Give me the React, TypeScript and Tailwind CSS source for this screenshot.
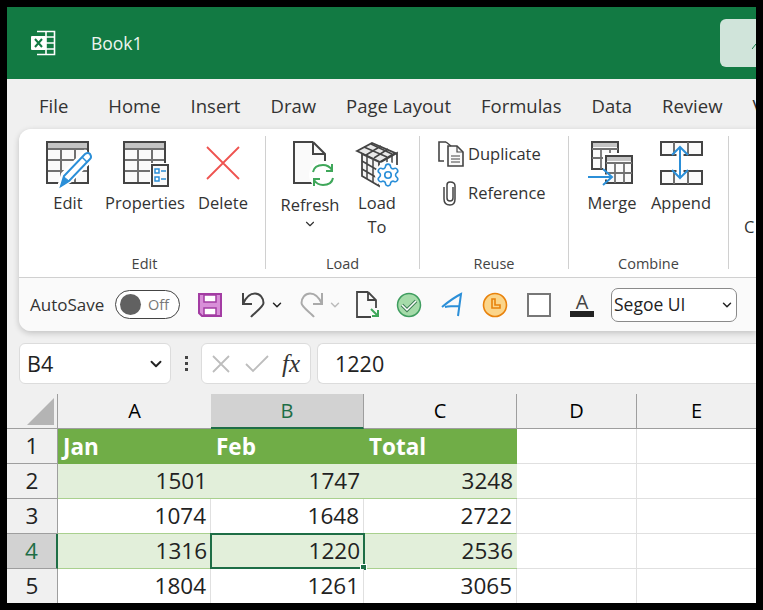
import React from "react";
import { ChevronDown, Settings } from "lucide-react";

const font = "font-['Open_Sans',sans-serif]";
const grid = "#707070";
const edge = "#444444";
const blue = "#2b8fd8";

const tabs = ["Home", "Insert", "Draw", "Page Layout", "Formulas", "Data", "Review", "View"];

const rows = [
  { n: "2", a: "1501", b: "1747", c: "3248", band: true },
  { n: "3", a: "1074", b: "1648", c: "2722", band: false },
  { n: "4", a: "1316", b: "1220", c: "2536", band: true, active: true },
  { n: "5", a: "1804", b: "1261", c: "3065", band: false },
];

const TableBase = () => (
  <>
    <rect x="1" y="1" width="41" height="41" fill="#fafafa" stroke={edge} strokeWidth="2" />
    <rect x="2" y="2" width="39" height="5" fill="#c4c4c4" />
    <path d="M2 8H41M2 19H41M2 30H41M15 8V41M29 8V41" stroke={grid} strokeWidth="2" fill="none" />
  </>
);

const EditIcon = () => (
  <svg width="48" height="48" viewBox="0 0 48 48">
    <TableBase />
    <path d="M13 46 L17 33 L39 11 L46 18 L24 40 Z" fill="#fff" stroke="#fff" strokeWidth="4" />
    <path d="M15 45 L18 35 L39 13 Q42 11 44 13 Q46 16 44 18 L23 40 Z" fill="#fff" stroke={blue} strokeWidth="2" />
    <path d="M15 45 L18 36 L23 40 Z" fill={blue} stroke={blue} />
    <path d="M36 16 L41 21" stroke={blue} strokeWidth="1.5" />
  </svg>
);

const PropertiesIcon = () => (
  <svg width="48" height="48" viewBox="0 0 48 48">
    <TableBase />
    <rect x="27" y="22" width="20" height="26" fill="#fff" />
    <rect x="29" y="24" width="16" height="21" fill="#fafafa" stroke={edge} strokeWidth="2" />
    <rect x="32" y="28" width="4" height="4" fill="#fff" stroke={blue} strokeWidth="1.5" />
    <rect x="32" y="36" width="4" height="4" fill="#fff" stroke={blue} strokeWidth="1.5" />
    <path d="M38 30H43M38 38H43" stroke={blue} strokeWidth="1.5" />
  </svg>
);

const DeleteIcon = () => (
  <svg width="48" height="48" viewBox="0 0 48 48">
    <path d="M8 6L40 38M40 6L8 38" stroke="#ef5350" strokeWidth="1.8" />
  </svg>
);

const RefreshIcon = () => (
  <svg width="48" height="48" viewBox="0 0 48 48">
    <path d="M21 1L32 13V22H22V42H1V1Z" fill="#fafafa" />
    <path d="M20 1H1V42H20M20 1V13H32M20 1L32 13V20" fill="none" stroke={edge} strokeWidth="2" />
    <circle cx="30" cy="34" r="14" fill="#fff" />
    <path d="M20 31C21 26 25 24 30 24C34 24 37 26 39 29M39 23V30H33" fill="none" stroke="#3fa75a" strokeWidth="2" />
    <path d="M40 37C39 42 35 44 30 44C26 44 23 42 21 39M21 45V38H27" fill="none" stroke="#3fa75a" strokeWidth="2" />
  </svg>
);

const LoadToIcon = () => (
  <svg width="48" height="48" viewBox="0 0 48 48">
    <path d="M2 10L17 2L40 12L25 21Z" fill="#e8e8e8" stroke={edge} strokeWidth="1.8" />
    <path d="M9 6L32 16M16 3L37 13M11 14L26 5M19 17L33 8" stroke={edge} strokeWidth="1.5" fill="none" />
    <path d="M7 13L7 35L24 45L24 21Z" fill="#f5f5f5" stroke={edge} strokeWidth="1.8" />
    <path d="M12 16V38M18 19V42M7 20L24 30M7 28L24 38" stroke={edge} strokeWidth="1.5" fill="none" />
    <path d="M26 21L42 12V24" fill="none" stroke={edge} strokeWidth="1.8" />
    <path d="M32 17V24M37 15V24" stroke={edge} strokeWidth="1.5" />
    <circle cx="33" cy="34" r="13" fill="#fff" />
    <Settings x={20} y={21} width={26} height={26} color={blue} strokeWidth={1.5} />
  </svg>
);

const MergeIcon = () => (
  <svg width="48" height="48" viewBox="0 0 48 48">
    <rect x="5" y="1" width="26" height="27" fill="#fafafa" stroke={edge} strokeWidth="2" />
    <rect x="6" y="2" width="24" height="4" fill="#c4c4c4" />
    <path d="M5 8H31M5 17H31M14 8V28M23 8V28" stroke={grid} strokeWidth="1.8" />
    <rect x="18" y="14" width="28" height="29" fill="#fafafa" stroke="#fff" strokeWidth="4" />
    <rect x="19" y="15" width="26" height="27" fill="#fafafa" stroke={edge} strokeWidth="2" />
    <rect x="20" y="16" width="24" height="4" fill="#c4c4c4" />
    <path d="M19 22H45M19 32H45M28 22V42M37 22V42" stroke={grid} strokeWidth="1.8" />
    <path d="M1 36H24" stroke="#fff" strokeWidth="5" />
    <path d="M1 36H24M16 28L25 36L16 44" fill="none" stroke={blue} strokeWidth="2" />
  </svg>
);

const AppendIcon = () => (
  <svg width="48" height="48" viewBox="0 0 48 48">
    <rect x="4" y="1" width="41" height="13" fill="#fafafa" stroke={edge} strokeWidth="2" />
    <rect x="4" y="30" width="41" height="13" fill="#fafafa" stroke={edge} strokeWidth="2" />
    <path d="M17 1V14M31 1V14M17 30V43M31 30V43" stroke={grid} strokeWidth="2" />
    <path d="M23 6V38" stroke="#fff" strokeWidth="7" />
    <path d="M15 14L23 6L31 14M15 29L23 37L31 29M23 6V37" fill="none" stroke={blue} strokeWidth="2" />
  </svg>
);

const DuplicateIcon = () => (
  <svg width="28" height="26" viewBox="0 0 28 26">
    <path d="M9 1H2V20H7" fill="none" stroke={edge} strokeWidth="1.6" />
    <path d="M11 5H20L26 11V25H11Z" fill="#fafafa" stroke={edge} strokeWidth="1.6" />
    <path d="M20 5V11H26M14 15H23M14 18H23M14 21H23" fill="none" stroke={edge} strokeWidth="1.2" />
    <path d="M9 1L14 5" stroke={edge} strokeWidth="1.4" />
  </svg>
);

const ClipIcon = () => (
  <svg width="16" height="26" viewBox="0 0 16 26">
    <path d="M11 7V18C11 20 10 21 8 21C6 21 5 20 5 18V5C5 3 6 2 8 2C11 2 13 3 13 6V19C13 23 11 25 8 25C4 25 2 23 2 19V7" fill="none" stroke={edge} strokeWidth="1.5" />
  </svg>
);

const RibbonButton = ({ icon, label, second, w, iconClass = "", labelClass = "mt-[1px]" }: any) => (
  <div className="flex flex-col items-center" style={{ width: w }}>
    <div className={`h-[48px] w-[48px] ${iconClass}`}>{icon}</div>
    <div className={`h-[25px] text-[16.5px] leading-[25px] text-[#333] ${labelClass}`}>{label}</div>
    {second}
  </div>
);

const Group = ({ label, width, pl, children }: any) => (
  <div className="flex h-[133px] shrink-0 flex-col border-r border-[#d0d0d0] pt-[5px]" style={{ width }}>
    <div className="flex h-[120px] shrink-0 items-start">{children}</div>
    <div className="text-center text-[14.5px] leading-[6px] text-[#444]" style={{ paddingLeft: pl }}>
      {label}
    </div>
  </div>
);

const App = () => {
  return (
    <div className={`h-[610px] w-[763px] overflow-hidden bg-black p-[7px] ${font}`}>
      <div className="h-[596px] w-[749px] overflow-hidden bg-[#f0f0f0]">
        {/* title bar */}
        <div className="flex h-[72px] items-center justify-between overflow-hidden bg-[#127a43]">
          <div className="flex items-center">
            <svg className="ml-[23px]" width="26" height="26" viewBox="0 0 26 26">
              <path d="M7 1.5H24.5V24.5H7" fill="none" stroke="#fff" strokeWidth="1.6" />
              <path d="M16 2V24M16 7H24M16 13H24M16 19H24" stroke="#fff" strokeWidth="1.6" />
              <rect x="1" y="6" width="15" height="14" rx="1" fill="#fff" />
              <path d="M5 9L12 17M12 9L5 17" stroke="#127a43" strokeWidth="2" />
            </svg>
            <div className="ml-[35px] text-[17.5px] text-[#eef5f0]">Book1</div>
          </div>
          <div className="flex h-[48px] w-[36px] items-center justify-end rounded-l-[6px] bg-[#d0e4da]">
            <svg className="mt-[6px]" width="4" height="7" viewBox="0 0 4 7">
              <path d="M0 6L4 1" stroke="#127a43" strokeWidth="1" />
            </svg>
          </div>
        </div>

        {/* tabs */}
        <div className="flex h-[50px] items-center whitespace-nowrap pl-[32px] pt-[4px] text-[18.5px] text-[#333]">
          <div className="mr-[40px]">File</div>
          <div className="flex gap-[30px]">
            {tabs.map((t) => (
              <div key={t}>{t}</div>
            ))}
          </div>
        </div>

        {/* ribbon */}
        <div className="ml-[12px] overflow-hidden rounded-l-[12px] shadow-[0_2px_6px_rgba(0,0,0,0.2)]">
          <div className="flex h-[148px] bg-white pt-[7px]">
            <Group label="Edit" width={247} pl={5}>
              <div className="flex pl-[11px]">
                <RibbonButton w={76} iconClass="ml-[4px]" icon={<EditIcon />} label="Edit" />
                <RibbonButton w={78} iconClass="ml-[4px]" icon={<PropertiesIcon />} label="Properties" />
                <RibbonButton w={78} icon={<DeleteIcon />} label="Delete" />
              </div>
            </Group>
            <Group label="Load" width={154}>
              <div className="flex pl-[11px]">
                <RibbonButton
                  w={66}
                  iconClass="ml-[14px]"
                  labelClass="mt-[3px]"
                  icon={<RefreshIcon />}
                  label="Refresh"
                  second={<ChevronDown size={14} color="#333" />}
                />
                <RibbonButton
                  w={68}
                  iconClass="ml-[4px]"
                  icon={<LoadToIcon />}
                  label="Load"
                  second={<div className="text-[16.5px] leading-[24px] text-[#333]">To</div>}
                />
              </div>
            </Group>
            <Group label="Reuse" width={149}>
              <div className="flex flex-col gap-[13px] pl-[17px] text-[16.5px] text-[#333]">
                <div className="flex h-[26px] items-center gap-[3px]">
                  <DuplicateIcon />
                  <span>Duplicate</span>
                </div>
                <div className="flex h-[26px] items-center">
                  <div className="ml-[5px] mr-[10px] flex"><ClipIcon /></div>
                  <span>Reference</span>
                </div>
              </div>
            </Group>
            <Group label="Combine" width={160}>
              <div className="flex pl-[9px]">
                <RibbonButton w={68} iconClass="mr-[2px]" icon={<MergeIcon />} label="Merge" />
                <RibbonButton w={70} icon={<AppendIcon />} label="Append" />
              </div>
            </Group>
            <div className="pl-[15px] pt-[79px] text-[16.5px] text-[#333]">C</div>
          </div>

          {/* quick access */}
          <div className="flex h-[54px] items-center border-t border-[#d0d0d0] bg-[#fafafa] pl-[11px]">
            <span className="w-[76px] text-[17px] text-[#333]">AutoSave</span>
            <div className="ml-[9px] flex h-[29px] w-[65px] items-center rounded-full border border-[#444] bg-white pl-[4px]">
              <div className="h-[21px] w-[21px] rounded-full bg-[#616161]" />
              <span className="ml-[7px] text-[14.5px] text-[#777]">Off</span>
            </div>
            <svg className="ml-[18px]" width="24" height="24" viewBox="0 0 24 24">
              <path d="M1 1H23V23H4L1 20Z" fill="#d88fd8" stroke="#a33ca3" strokeWidth="2" />
              <rect x="6" y="2" width="12" height="7" fill="#fff" stroke="#a33ca3" strokeWidth="1.5" />
              <rect x="6" y="15" width="12" height="7" fill="#fff" stroke="#a33ca3" strokeWidth="1.5" />
            </svg>
            <svg className="ml-[19px]" width="24" height="26" viewBox="0 0 24 26">
              <path d="M2 1V12H11M2 12C5 5 9 1.5 14 1.5C19 1.5 22.5 6 22.5 11C22.5 15 13 21 10 25" fill="none" stroke="#444" strokeWidth="2" />
            </svg>
            <ChevronDown className="ml-[5px]" size={14} color="#222" strokeWidth={2.5} />
            <svg className="ml-[16px]" width="24" height="26" viewBox="0 0 24 26">
              <path d="M22 1V12H13M22 12C19 5 15 1.5 10 1.5C5 1.5 1.5 6 1.5 11C1.5 15 11 21 14 25" fill="none" stroke="#aaa" strokeWidth="2" />
            </svg>
            <ChevronDown className="ml-[4px]" size={14} color="#bbb" strokeWidth={2.5} />
            <svg className="ml-[14px]" width="24" height="27" viewBox="0 0 24 27">
              <path d="M12 1H1V26H15M12 1V9H20M12 1L20 9V17" fill="none" stroke="#444" strokeWidth="1.8" />
              <path d="M15 18L22 25M22 19V25H16" fill="none" stroke="#3fa75a" strokeWidth="2" />
            </svg>
            <svg className="ml-[16px]" width="26" height="26" viewBox="0 0 26 26">
              <circle cx="13" cy="13" r="11.5" fill="#a5dba9" stroke="#3f9d5f" strokeWidth="1.5" />
              <path d="M6 13L11 18L20 9" fill="none" stroke="#3f7d55" strokeWidth="3.5" />
              <path d="M6 13L11 18L20 9" fill="none" stroke="#fff" strokeWidth="1.5" />
            </svg>
            <svg className="ml-[19px]" width="22" height="26" viewBox="0 0 22 26">
              <path d="M1 15C7 10 14 5 20 2C19 9 18 17 17 24M4 15C9 14 13 14 18 14" fill="none" stroke={blue} strokeWidth="2" />
            </svg>
            <svg className="ml-[19px]" width="26" height="26" viewBox="0 0 26 26">
              <circle cx="13" cy="13" r="11.5" fill="#fbd58a" stroke="#e8820c" strokeWidth="1.6" />
              <path d="M10 7V16H18V13H13V7Z" fill="#fbd58a" stroke="#e8820c" strokeWidth="1.6" />
            </svg>
            <div className="ml-[19px] h-[24px] w-[24px] border-2 border-[#777] bg-white" />
            <div className="ml-[19px] flex w-[24px] flex-col items-center">
              <span className="h-[18px] text-[20px] leading-[18px] text-[#444]">A</span>
              <div className="h-[6px] w-[24px] bg-[#222]" />
            </div>
            <div className="ml-[17px] flex h-[34px] w-[126px] items-center justify-between rounded-[7px] border border-[#8a8a8a] bg-white pl-[2px] pr-[2px]">
              <span className="text-[17.5px] text-[#222]">Segoe UI</span>
              <ChevronDown size={14} color="#222" strokeWidth={2.5} />
            </div>
          </div>
        </div>

        {/* formula bar */}
        <div className="ml-[12px] mt-[12px] flex h-[41px] items-stretch">
          <div className="flex w-[152px] items-center justify-between rounded-[6px] border border-[#dcdcdc] bg-white pl-[7px] pr-[5px]">
            <span className="pt-[2px] text-[21.5px] text-[#222]">B4</span>
            <ChevronDown size={18} color="#222" strokeWidth={2.5} />
          </div>
          <div className="flex w-[30px] flex-col items-center justify-center gap-[3px]">
            <div className="h-[3px] w-[3px] bg-[#444]" />
            <div className="h-[3px] w-[3px] bg-[#444]" />
            <div className="h-[3px] w-[3px] bg-[#444]" />
          </div>
          <div className="flex w-[110px] items-center rounded-[6px] border border-[#dcdcdc] bg-white pl-[9px]">
            <svg width="20" height="20" viewBox="0 0 20 20">
              <path d="M2 2L18 18M18 2L2 18" stroke="#bdbdbd" strokeWidth="1.8" />
            </svg>
            <svg className="ml-[13px]" width="26" height="20" viewBox="0 0 26 20">
              <path d="M2 10L9 17L24 2" fill="none" stroke="#bdbdbd" strokeWidth="1.8" />
            </svg>
            <span className="ml-[12px] font-['Liberation_Serif',serif] text-[25px] italic leading-none text-[#333]">fx</span>
          </div>
          <div className="ml-[6px] flex flex-1 items-center rounded-l-[6px] border-y border-l border-[#dcdcdc] bg-white pl-[17px]">
            <span className="pt-[2px] text-[21.5px] text-[#222]">1220</span>
          </div>
        </div>

        {/* sheet */}
        <div className="mt-[10px] grid grid-cols-[51px_153px_153px_153px_120px_119px] text-[22.5px] text-[#222]">
          <div className="flex h-[35px] items-end justify-end border-b border-r border-[#9e9e9e] bg-[#f0f0f0] pb-[3px] pr-[3px]">
            <div className="h-0 w-0 border-b-[27px] border-l-[27px] border-b-[#b4b4b4] border-l-transparent" />
          </div>
          <div className="flex h-[35px] items-center justify-center border-b border-[#9e9e9e] text-[20px] text-black">A</div>
          <div className="flex h-[35px] items-center justify-center border-b-2 border-r border-b-[#1e6e46] border-r-[#9e9e9e] bg-[#d2d2d2] text-[20px] text-[#1e6e46]">B</div>
          <div className="flex h-[35px] items-center justify-center border-b border-r border-[#9e9e9e] text-[20px] text-black">C</div>
          <div className="flex h-[35px] items-center justify-center border-b border-r border-[#9e9e9e] text-[20px] text-black">D</div>
          <div className="flex h-[35px] items-center justify-center border-b border-[#9e9e9e] text-[20px] text-black">E</div>

          <div className="flex h-[35px] items-center justify-center border-b border-r border-[#9e9e9e] bg-[#f0f0f0]">1</div>
          <div className="flex h-[35px] items-center bg-[#70ad47] pl-[5px] font-bold text-white">Jan</div>
          <div className="flex h-[35px] items-center bg-[#70ad47] pl-[5px] font-bold text-white">Feb</div>
          <div className="flex h-[35px] items-center bg-[#70ad47] pl-[5px] font-bold text-white">Total</div>
          <div className="h-[35px] border-b border-r border-[#e0e0e0] bg-white" />
          <div className="h-[35px] border-b border-[#e0e0e0] bg-white" />

          {rows.map((r) => (
            <React.Fragment key={r.n}>
              <div
                className={
                  r.active
                    ? "flex h-[35px] items-center justify-center border-b border-r-2 border-b-[#9e9e9e] border-r-[#1e6e46] bg-[#d2d2d2] text-[#1e6e46]"
                    : "flex h-[35px] items-center justify-center border-b border-r border-[#9e9e9e] bg-[#f0f0f0]"
                }
              >
                {r.n}
              </div>
              <div className={`flex h-[35px] items-center justify-end border-b border-[#a9d08e] pr-[4px] ${r.band ? "bg-[#e2efda]" : "border-r border-r-[#e0e0e0] bg-white"}`}>
                {r.a}
              </div>
              <div className={`relative flex h-[35px] items-center justify-end border-b border-[#a9d08e] pr-[4px] ${r.band ? "bg-[#e2efda]" : "border-r border-r-[#e0e0e0] bg-white"}`}>
                {r.b}
                {r.active && (
                  <>
                    <div className="absolute -left-[1px] -top-[1px] h-[36px] w-[155px] border-2 border-[#1e6e46]" />
                    <div className="absolute -bottom-[3px] -right-[3px] h-[7px] w-[7px] border border-white bg-[#1e6e46]" />
                  </>
                )}
              </div>
              <div className={`flex h-[35px] items-center justify-end border-b border-[#a9d08e] pr-[4px] ${r.band ? "bg-[#e2efda]" : "border-r border-r-[#e0e0e0] bg-white"}`}>
                {r.c}
              </div>
              <div className="h-[35px] border-b border-r border-[#e0e0e0] bg-white" />
              <div className="h-[35px] border-b border-[#e0e0e0] bg-white" />
            </React.Fragment>
          ))}
        </div>
      </div>
    </div>
  );
};

export default App;
